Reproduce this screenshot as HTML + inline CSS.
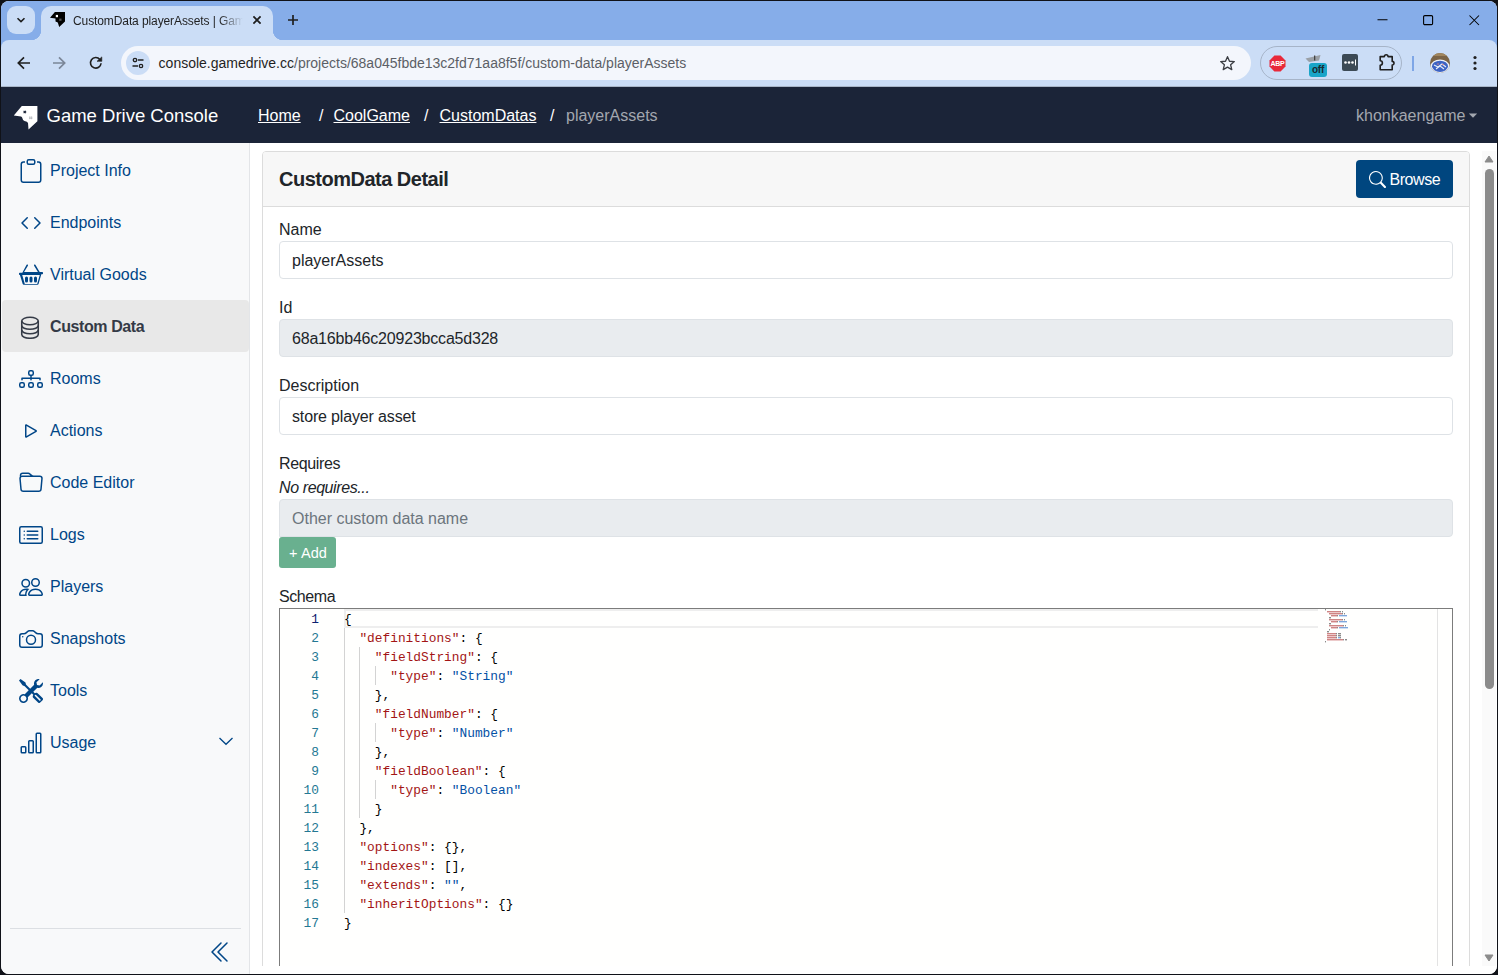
<!DOCTYPE html>
<html><head><meta charset="utf-8">
<style>
*{box-sizing:border-box;margin:0;padding:0}
html,body{width:1498px;height:975px;overflow:hidden;background:#101218;font-family:"Liberation Sans",sans-serif}
.abs{position:absolute}
#win{position:absolute;left:1px;top:1px;width:1496px;height:973px;border-radius:8px;overflow:hidden;background:#fff}
#tabstrip{position:absolute;left:0;top:0;width:1496px;height:50px;background:#86ade9}
#toolbar{position:absolute;left:0;top:39px;width:1496px;height:47px;border-radius:8px 8px 0 0;background:#cbddf6;border-bottom:1px solid #a9b6c8}
#navbar{position:absolute;left:0;top:86px;width:1496px;height:56px;background:#1b2438}
#sidebar{position:absolute;left:0;top:142px;width:249px;height:831px;background:#f8f9fa;border-right:1px solid #e3e5e8}
#main{position:absolute;left:249px;top:142px;width:1247px;height:831px;background:#fff}
.nav-item{position:absolute;left:0;width:248px;height:52px;color:#004687;font-size:16px}
.nav-item .t{position:absolute;left:49px;top:18px;line-height:18px}
.nav-item svg{position:absolute;left:17.5px;top:15px}
.nav-item.active{background:#e8e8e8;color:#343a46;font-weight:700;left:1px;width:247px;border-radius:4px;letter-spacing:-0.4px}
.nav-item.active svg{left:16px}
.nav-item.active .t{left:48px}

.lbl{position:absolute;margin-top:0.7px;left:29px;font-size:16px;line-height:16px;color:#212529;white-space:nowrap}
.inp{position:absolute;left:29px;width:1174px;height:38px;border:1px solid #dee2e6;border-radius:4px;background:#fff}
.inp.dis{background:#e9ecef}
.it{position:absolute;left:12px;top:11.3px;font-size:16px;line-height:16px;color:#212529;white-space:nowrap}
.ln{position:relative;height:19px;width:39px;text-align:right;font-family:"Liberation Mono",monospace;font-size:12.83px;line-height:19px;color:#237893}
.ln.cur{color:#0b216f}
.code{font-family:"Liberation Mono",monospace;font-size:12.83px;line-height:19px;white-space:pre;color:#000}
.cl{height:19px}
.k{color:#a31515}.v{color:#0451a5}.p{color:#000}
.g{position:absolute;width:1px;background:#d3d3d3}
</style></head>
<body>
<div id="win">
  <div id="tabstrip">
    <div class="abs" style="left:6px;top:5px;width:28px;height:28px;border-radius:9px;background:#cbddf6"></div>
    <svg class="abs" style="left:14px;top:13px" width="12" height="12" viewBox="0 0 12 12"><path d="M2.5 4.2 L6 7.6 L9.5 4.2" fill="none" stroke="#1f1f1f" stroke-width="1.6"/></svg>
    <div class="abs" style="left:40px;top:5px;width:232px;height:40px;background:#cbddf6;border-radius:10px 10px 0 0"></div>
    <div class="abs" style="left:30px;top:29px;width:10px;height:10px;background:radial-gradient(circle at 0 0,transparent 10px,#cbddf6 10.5px)"></div>
    <div class="abs" style="left:272px;top:29px;width:10px;height:10px;background:radial-gradient(circle at 100% 0,transparent 10px,#cbddf6 10.5px)"></div>
    <svg class="abs" style="left:48px;top:10px" width="17" height="17" viewBox="0 0 17 17"><path d="M5.9 1 L16 1 L16 10.5 L10.2 16 L8.8 11.4 L6.5 10.5 L6.5 7.4 L1 6.8 Z" fill="#000"/><rect x="6.8" y="3.9" width="2.2" height="2.3" fill="#fff"/><rect x="10.2" y="7.6" width="2.3" height="2.2" fill="#555"/></svg>
    <div class="abs" style="left:72px;top:13px;font-size:12px;line-height:15px;letter-spacing:-0.1px;color:#1f1f1f;white-space:nowrap;width:175px;overflow:hidden;-webkit-mask-image:linear-gradient(90deg,#000 146px,transparent 170px)">CustomData playerAssets | Game Drive</div>
    <svg class="abs" style="left:250px;top:13px" width="12" height="12" viewBox="0 0 12 12"><path d="M2.4 2.4 L9.6 9.6 M9.6 2.4 L2.4 9.6" stroke="#1f1f1f" stroke-width="1.8"/></svg>
    <svg class="abs" style="left:285px;top:12px" width="14" height="14" viewBox="0 0 14 14"><path d="M7 2 V12 M2 7 H12" stroke="#1f1f1f" stroke-width="1.7"/></svg>
    <svg class="abs" style="left:1375px;top:11px" width="14" height="14" viewBox="0 0 14 14"><path d="M1.5 7.8 H11.5" stroke="#000" stroke-width="1.1"/></svg>
    <svg class="abs" style="left:1421px;top:12px" width="14" height="14" viewBox="0 0 14 14"><rect x="1.6" y="2.6" width="9" height="9" rx="1.2" fill="none" stroke="#000" stroke-width="1.1"/></svg>
    <svg class="abs" style="left:1466px;top:12px" width="14" height="14" viewBox="0 0 14 14"><path d="M2.5 2.5 L12 12 M12 2.5 L2.5 12" stroke="#000" stroke-width="1.05"/></svg>
  </div>
  <div id="toolbar">
    <svg class="abs" style="left:13px;top:13px" width="20" height="20" viewBox="0 0 20 20"><path d="M16 10 H4.5 M10 4.3 L4.3 10 L10 15.7" fill="none" stroke="#1f1f1f" stroke-width="1.7"/></svg>
    <svg class="abs" style="left:48px;top:13px" width="20" height="20" viewBox="0 0 20 20"><path d="M4 10 H15.5 M10 4.3 L15.7 10 L10 15.7" fill="none" stroke="#7b8698" stroke-width="1.7"/></svg>
    <svg class="abs" style="left:85px;top:13px" width="20" height="20" viewBox="0 0 20 20"><path d="M15.08 10.26 A5.3 5.3 0 1 1 13.86 6.39" fill="none" stroke="#1f1f1f" stroke-width="1.6"/><path d="M11 8.35 H15.8 V3.9 Z" fill="#1f1f1f" stroke="#1f1f1f" stroke-width="0.6" stroke-linejoin="round"/></svg>
    <div class="abs" style="left:120px;top:6px;width:1130px;height:34px;border-radius:17px;background:#f3f6fc"></div>
    <div class="abs" style="left:125px;top:11px;width:24px;height:24px;border-radius:12px;background:#cbddf6"></div>
    <svg class="abs" style="left:129px;top:15px" width="16" height="16" viewBox="0 0 16 16"><circle cx="5" cy="5" r="1.7" fill="none" stroke="#1f1f1f" stroke-width="1.3"/><path d="M8 5 H13.5 M2.5 11 H8" stroke="#1f1f1f" stroke-width="1.3"/><circle cx="11" cy="11" r="1.7" fill="none" stroke="#1f1f1f" stroke-width="1.3"/></svg>
    <div class="abs" style="left:157.6px;top:15px;font-size:14px;line-height:17px;white-space:nowrap;color:#1f1f1f">console.gamedrive.cc<span style="color:#5b5f66">/projects/68a045fbde13c2fd71aa8f5f/custom-data/playerAssets</span></div>
    <svg class="abs" style="left:1216.5px;top:13.5px" width="19" height="19" viewBox="0 0 20 20"><path d="M10 2.8 L12.1 7.6 L17.2 8 L13.3 11.4 L14.5 16.5 L10 13.8 L5.5 16.5 L6.7 11.4 L2.8 8 L7.9 7.6 Z" fill="none" stroke="#3c3f44" stroke-width="1.4" stroke-linejoin="round"/></svg>
    <div class="abs" style="left:1259px;top:6px;width:142px;height:34px;border-radius:17px;border:1px solid #a6b4c8"></div>
    <svg class="abs" style="left:1268px;top:14.5px" width="17" height="17" viewBox="0 0 17 17"><path d="M5.4 0.5 H11.6 L16.5 5.4 V11.6 L11.6 16.5 H5.4 L0.5 11.6 V5.4 Z" fill="#e8293a"/><text x="8.5" y="11.2" font-family="Liberation Sans" font-weight="700" font-size="7" fill="#fff" text-anchor="middle" letter-spacing="-0.2">ABP</text></svg>
    <svg class="abs" style="left:1304px;top:14px" width="18" height="9" viewBox="0 0 18 9"><path d="M0.5 4.5 L15.5 1 L14 6.5 L4 8 Z" fill="#9aa0a6"/><rect x="9" y="1.5" width="1.3" height="5" fill="#444"/></svg>
    <div class="abs" style="left:1308px;top:23px;width:18px;height:13.5px;border-radius:3px;background:#19a5c8;color:#1a2a30;font-size:10px;font-weight:700;line-height:14px;text-align:center;letter-spacing:-0.3px">off</div>
    <div class="abs" style="left:1341px;top:14px;width:16px;height:17px;border-radius:2px;background:#3c4a55"></div>
    <svg class="abs" style="left:1341px;top:14px" width="16" height="17" viewBox="0 0 16 17"><circle cx="3.5" cy="8.5" r="1.3" fill="#fff"/><circle cx="7" cy="8.5" r="1.3" fill="#fff"/><circle cx="10.5" cy="8.5" r="1.3" fill="#fff"/><rect x="13" y="5.5" width="1" height="6" fill="#fff"/></svg>
    <svg class="abs" style="left:1375px;top:12px" width="22" height="22" viewBox="0 0 22 22"><path d="M4.2 4.6 H8.4 A1.8 1.8 0 0 1 12 4.6 H16.2 V9.4 A1.8 1.8 0 0 1 16.2 13 V17.8 H4.2 V13.2 A2.2 2.2 0 0 0 4.2 8.8 Z" fill="none" stroke="#1f1f1f" stroke-width="1.6" stroke-linejoin="round"/></svg>
    <div class="abs" style="left:1411px;top:16px;width:2px;height:15px;background:#7ea6e6"></div>
    <svg class="abs" style="left:1428px;top:12px" width="22" height="22" viewBox="0 0 22 22"><defs><clipPath id="av"><circle cx="11" cy="11" r="10"/></clipPath></defs><g clip-path="url(#av)"><rect x="0" y="0" width="22" height="22" fill="#7b6447"/><rect x="0" y="0" width="22" height="4" fill="#a0855e"/><ellipse cx="11" cy="14.5" rx="9.5" ry="7" fill="#eef2f8"/><ellipse cx="11" cy="14.3" rx="8" ry="5.6" fill="#3d63c4"/><path d="M5 13 L9 15 L13 12 L17 15 M7 17 L11 14 L15 17" stroke="#e8eef8" stroke-width="1.1" fill="none"/><circle cx="9" cy="12" r="0.8" fill="#d98080"/><circle cx="14" cy="12.5" r="0.8" fill="#d98080"/></g></svg>
    <svg class="abs" style="left:1467px;top:13px" width="14" height="20" viewBox="0 0 14 20"><circle cx="7" cy="4.5" r="1.6" fill="#1f1f1f"/><circle cx="7" cy="10" r="1.6" fill="#1f1f1f"/><circle cx="7" cy="15.5" r="1.6" fill="#1f1f1f"/></svg>
  </div>
  <div id="navbar">
    <svg class="abs" style="left:11px;top:17px" width="28" height="28" viewBox="0 0 28 28"><path d="M9.8 2.1 L25.4 2 L25.4 17.3 L16.5 25.6 L16 19 Q15.5 17.2 12.5 16.9 Q10.6 16.2 10.5 14.5 Q10.2 12.6 9.1 12.4 L1.8 11.5 Z" fill="#fff"/><path d="M11.6 6.8 L14 9.2 M14 6.8 L11.6 9.2" stroke="#1b2438" stroke-width="1.2"/><path d="M17.8 12.3 V15.3 M19.6 12.3 V15.3 M17 13.3 H20.4 M17 14.5 H20.4" stroke="#a0a4ac" stroke-width="0.5"/></svg>
    <div class="abs" style="left:45.5px;top:19.5px;font-size:18.5px;line-height:18.5px;color:#fff;white-space:nowrap">Game Drive Console</div>
    <div class="abs" style="left:257px;top:21.2px;font-size:16px;line-height:16px;color:#fff;white-space:nowrap;text-decoration:underline;text-underline-offset:0.6px">Home</div>
    <div class="abs" style="left:318px;top:21.2px;font-size:16px;line-height:16px;color:#fff">/</div>
    <div class="abs" style="left:332.5px;top:21.2px;font-size:16px;line-height:16px;color:#fff;white-space:nowrap;text-decoration:underline;text-underline-offset:0.6px">CoolGame</div>
    <div class="abs" style="left:423px;top:21.2px;font-size:16px;line-height:16px;color:#fff">/</div>
    <div class="abs" style="left:438.5px;top:21.2px;font-size:16px;line-height:16px;color:#fff;white-space:nowrap;text-decoration:underline;text-underline-offset:0.6px">CustomDatas</div>
    <div class="abs" style="left:549px;top:21.2px;font-size:16px;line-height:16px;color:#fff">/</div>
    <div class="abs" style="left:565px;top:21.2px;font-size:16px;line-height:16px;color:#a3a7af;white-space:nowrap">playerAssets</div>
    <div class="abs" style="left:1355px;top:21px;font-size:16px;line-height:16px;color:#a3a7af;white-space:nowrap">khonkaengame</div>
    <svg class="abs" style="left:1467px;top:26px" width="10" height="6" viewBox="0 0 10 6"><path d="M0.8 0.5 H9.2 L5 4.8 Z" fill="#a3a7af"/></svg>
  </div>
  <div id="sidebar">
    <div class="nav-item" style="top:1px"><svg width="24" height="24" viewBox="0 0 16 16" fill="#004687"><path d="M4 1.5H3a2 2 0 0 0-2 2V14a2 2 0 0 0 2 2h10a2 2 0 0 0 2-2V3.5a2 2 0 0 0-2-2h-1v1h1a1 1 0 0 1 1 1V14a1 1 0 0 1-1 1H3a1 1 0 0 1-1-1V3.5a1 1 0 0 1 1-1h1z"/><path d="M9.5 1a.5.5 0 0 1 .5.5v1a.5.5 0 0 1-.5.5h-3a.5.5 0 0 1-.5-.5v-1a.5.5 0 0 1 .5-.5zm-3-1A1.5 1.5 0 0 0 5 1.5v1A1.5 1.5 0 0 0 6.5 4h3A1.5 1.5 0 0 0 11 2.5v-1A1.5 1.5 0 0 0 9.5 0z"/></svg><div class="t">Project Info</div></div>
    <div class="nav-item" style="top:53px"><svg width="24" height="24" viewBox="0 0 16 16" fill="#004687"><path d="M5.854 4.854a.5.5 0 1 0-.708-.708l-3.5 3.5a.5.5 0 0 0 0 .708l3.5 3.5a.5.5 0 0 0 .708-.708L2.707 8zm4.292 0a.5.5 0 0 1 .708-.708l3.5 3.5a.5.5 0 0 1 0 .708l-3.5 3.5a.5.5 0 0 1-.708-.708L13.293 8z"/></svg><div class="t">Endpoints</div></div>
    <div class="nav-item" style="top:105px"><svg width="24" height="24" viewBox="0 0 16 16" fill="#004687"><path d="M4 10a1 1 0 0 1 2 0v2a1 1 0 0 1-2 0zm3 0a1 1 0 0 1 2 0v2a1 1 0 0 1-2 0zm4-1a1 1 0 0 0-1 1v2a1 1 0 0 0 2 0v-2a1 1 0 0 0-1-1"/><path d="M5.757 1.071a.5.5 0 0 1 .172.686L3.383 6h9.234L10.07 1.757a.5.5 0 1 1 .858-.514L13.783 6H15.5a.5.5 0 0 1 .5.5v.5a.5.5 0 0 1-.5.5h-.623l-1.844 6.456a.75.75 0 0 1-.722.544H3.189a.75.75 0 0 1-.722-.544L.623 8H.5a.5.5 0 0 1-.5-.5v-.5a.5.5 0 0 1 .5-.5h1.717L5.07 1.243a.5.5 0 0 1 .686-.172zM2.163 8l1.714 6h8.246l1.714-6z"/></svg><div class="t">Virtual Goods</div></div>
    <div class="nav-item active" style="top:157px"><svg width="24" height="24" viewBox="0 0 16 16" fill="#2b2b2b"><g fill="none" stroke="#343a46" stroke-width="1.05"><ellipse cx="8" cy="4" rx="5.5" ry="2.5"/><path d="M2.5 4v9c0 1.4 2.5 2.5 5.5 2.5s5.5-1.1 5.5-2.5V4"/><path d="M2.5 7c0 1.4 2.5 2.5 5.5 2.5S13.5 8.4 13.5 7M2.5 10c0 1.4 2.5 2.5 5.5 2.5s5.5-1.1 5.5-2.5"/></g></svg><div class="t">Custom Data</div></div>
    <div class="nav-item" style="top:209px"><svg width="24" height="24" viewBox="0 0 16 16" fill="#004687"><path fill-rule="evenodd" d="M6 3.5A1.5 1.5 0 0 1 7.5 2h1A1.5 1.5 0 0 1 10 3.5v1A1.5 1.5 0 0 1 8.5 6v1H14a.5.5 0 0 1 .5.5v1a.5.5 0 0 1-1 0V8h-5v.5a.5.5 0 0 1-1 0V8h-5v.5a.5.5 0 0 1-1 0v-1A.5.5 0 0 1 2 7h5.5V6A1.5 1.5 0 0 1 6 4.5zM8.5 5a.5.5 0 0 0 .5-.5v-1a.5.5 0 0 0-.5-.5h-1a.5.5 0 0 0-.5.5v1a.5.5 0 0 0 .5.5zM0 11.5A1.5 1.5 0 0 1 1.5 10h1A1.5 1.5 0 0 1 4 11.5v1A1.5 1.5 0 0 1 2.5 14h-1A1.5 1.5 0 0 1 0 12.5zm1.5-.5a.5.5 0 0 0-.5.5v1a.5.5 0 0 0 .5.5h1a.5.5 0 0 0 .5-.5v-1a.5.5 0 0 0-.5-.5zm4.5.5A1.5 1.5 0 0 1 7.5 10h1a1.5 1.5 0 0 1 1.5 1.5v1A1.5 1.5 0 0 1 8.5 14h-1A1.5 1.5 0 0 1 6 12.5zm1.5-.5a.5.5 0 0 0-.5.5v1a.5.5 0 0 0 .5.5h1a.5.5 0 0 0 .5-.5v-1a.5.5 0 0 0-.5-.5zm4.5.5a1.5 1.5 0 0 1 1.5-1.5h1a1.5 1.5 0 0 1 1.5 1.5v1a1.5 1.5 0 0 1-1.5 1.5h-1a1.5 1.5 0 0 1-1.5-1.5zm1.5-.5a.5.5 0 0 0-.5.5v1a.5.5 0 0 0 .5.5h1a.5.5 0 0 0 .5-.5v-1a.5.5 0 0 0-.5-.5z"/></svg><div class="t">Rooms</div></div>
    <div class="nav-item" style="top:261px"><svg width="24" height="24" viewBox="0 0 16 16" fill="#004687"><path d="M10.804 8 5 4.633v6.734zm.792-.696a.802.802 0 0 1 0 1.392l-6.363 3.692C4.713 12.69 4 12.345 4 11.692V4.308c0-.653.713-.998 1.233-.696z"/></svg><div class="t">Actions</div></div>
    <div class="nav-item" style="top:313px"><svg width="24" height="24" viewBox="0 0 16 16" fill="#004687"><path d="M.54 3.87.5 3a2 2 0 0 1 2-2h3.672a2 2 0 0 1 1.414.586l.828.828A2 2 0 0 0 9.828 3h3.982a2 2 0 0 1 1.992 2.181l-.637 7A2 2 0 0 1 13.174 14H2.826a2 2 0 0 1-1.991-1.819l-.637-7a2 2 0 0 1 .342-1.31zM2.19 4a1 1 0 0 0-.996 1.09l.637 7a1 1 0 0 0 .995.91h10.348a1 1 0 0 0 .995-.91l.637-7A1 1 0 0 0 13.81 4zm4.69-1.707A1 1 0 0 0 6.172 2H2.5a1 1 0 0 0-1 .981l.006.139q.323-.119.684-.12h5.396z"/></svg><div class="t">Code Editor</div></div>
    <div class="nav-item" style="top:365px"><svg width="24" height="24" viewBox="0 0 16 16" fill="#004687"><path d="M14.5 3a.5.5 0 0 1 .5.5v9a.5.5 0 0 1-.5.5h-13a.5.5 0 0 1-.5-.5v-9a.5.5 0 0 1 .5-.5zm-13-1A1.5 1.5 0 0 0 0 3.5v9A1.5 1.5 0 0 0 1.5 14h13a1.5 1.5 0 0 0 1.5-1.5v-9A1.5 1.5 0 0 0 14.5 2z"/><path d="M5 8a.5.5 0 0 1 .5-.5h7a.5.5 0 0 1 0 1h-7A.5.5 0 0 1 5 8m0-2.5a.5.5 0 0 1 .5-.5h7a.5.5 0 0 1 0 1h-7a.5.5 0 0 1-.5-.5m0 5a.5.5 0 0 1 .5-.5h7a.5.5 0 0 1 0 1h-7a.5.5 0 0 1-.5-.5m-1-5a.5.5 0 1 1-1 0 .5.5 0 0 1 1 0M4 8a.5.5 0 1 1-1 0 .5.5 0 0 1 1 0m0 2.5a.5.5 0 1 1-1 0 .5.5 0 0 1 1 0"/></svg><div class="t">Logs</div></div>
    <div class="nav-item" style="top:417px"><svg width="24" height="24" viewBox="0 0 16 16" fill="#004687"><path d="M15 14s1 0 1-1-1-4-5-4-5 3-5 4 1 1 1 1zm-7.978-1L7 12.996c.001-.264.167-1.03.76-1.72C8.312 10.629 9.282 10 11 10c1.717 0 2.687.63 3.24 1.276.593.69.758 1.457.76 1.72l-.008.002-.014.002zM11 7a2 2 0 1 0 0-4 2 2 0 0 0 0 4m3-2a3 3 0 1 1-6 0 3 3 0 0 1 6 0M6.936 9.28a6 6 0 0 0-1.23-.247A7 7 0 0 0 5 9c-4 0-5 3-5 4q0 1 1 1h4.216A2.24 2.24 0 0 1 5 13c0-1.01.377-2.042 1.09-2.904.243-.294.526-.569.846-.816M4.92 10A5.5 5.5 0 0 0 4 13H1c0-.26.164-1.03.76-1.724.545-.636 1.492-1.256 3.16-1.275ZM1.5 5.5a3 3 0 1 1 6 0 3 3 0 0 1-6 0m3-2a2 2 0 1 0 0 4 2 2 0 0 0 0-4"/></svg><div class="t">Players</div></div>
    <div class="nav-item" style="top:469px"><svg width="24" height="24" viewBox="0 0 16 16" fill="#004687"><path d="M15 12a1 1 0 0 1-1 1H2a1 1 0 0 1-1-1V6a1 1 0 0 1 1-1h1.172a3 3 0 0 0 2.12-.879l.83-.828A1 1 0 0 1 6.827 3h2.344a1 1 0 0 1 .707.293l.828.828A3 3 0 0 0 12.828 5H14a1 1 0 0 1 1 1zM2 4a2 2 0 0 0-2 2v6a2 2 0 0 0 2 2h12a2 2 0 0 0 2-2V6a2 2 0 0 0-2-2h-1.172a2 2 0 0 1-1.414-.586l-.828-.828A2 2 0 0 0 9.172 2H6.828a2 2 0 0 0-1.414.586l-.828.828A2 2 0 0 1 3.172 4z"/><path d="M8 11a2.5 2.5 0 1 1 0-5 2.5 2.5 0 0 1 0 5m0 1a3.5 3.5 0 1 0 0-7 3.5 3.5 0 0 0 0 7M3 6.5a.5.5 0 1 1-1 0 .5.5 0 0 1 1 0"/></svg><div class="t">Snapshots</div></div>
    <div class="nav-item" style="top:521px"><svg width="24" height="24" viewBox="0 0 16 16" fill="#004687"><path d="M1 0 0 1l2.2 3.081a1 1 0 0 0 .815.419h.07a1 1 0 0 1 .708.293l2.675 2.675-2.617 2.654A3.003 3.003 0 0 0 0 13a3 3 0 1 0 5.878-.851l2.654-2.617.968.968-.305.914a1 1 0 0 0 .242 1.023l3.27 3.27a.997.997 0 0 0 1.414 0l1.586-1.586a.997.997 0 0 0 0-1.414l-3.27-3.27a1 1 0 0 0-1.023-.242L10.5 9.5l-.96-.96 2.68-2.643A3.005 3.005 0 0 0 16 3q0-.405-.102-.777l-2.14 2.141L12 4l-.364-1.757L13.777.102a3 3 0 0 0-3.675 3.68L7.462 6.46 4.793 3.793a1 1 0 0 1-.293-.707v-.071a1 1 0 0 0-.419-.814zm9.646 10.646a.5.5 0 0 1 .708 0l2.914 2.915a.5.5 0 0 1-.707.707l-2.915-2.914a.5.5 0 0 1 0-.708M3 11l.471.242.529.026.287.445.445.287.026.529L5 13l-.242.471-.026.529-.445.287-.287.445-.529.026L3 15l-.471-.242L2 14.732l-.287-.445L1.268 14l-.026-.529L1 13l.242-.471.026-.529.445-.287.287-.445.529-.026z"/></svg><div class="t">Tools</div></div>
    <div class="nav-item" style="top:573px"><svg width="24" height="24" viewBox="0 0 16 16" fill="#004687"><path d="M4 11H2v3h2zm5-4H7v7h2zm5-5v12h-2V2zm-2-1a1 1 0 0 0-1 1v12a1 1 0 0 0 1 1h2a1 1 0 0 0 1-1V2a1 1 0 0 0-1-1zM6 7a1 1 0 0 1 1-1h2a1 1 0 0 1 1 1v7a1 1 0 0 1-1 1H7a1 1 0 0 1-1-1zm-5 4a1 1 0 0 1 1-1h2a1 1 0 0 1 1 1v3a1 1 0 0 1-1 1H2a1 1 0 0 1-1-1z"/></svg><div class="t">Usage</div><svg style="position:absolute;left:217px;top:19px" width="16" height="12" viewBox="0 0 16 12"><path d="M1.5 3 L8 9.3 L14.5 3" fill="none" stroke="#004687" stroke-width="1.3"/></svg></div>
    <div class="abs" style="left:9px;top:785px;width:231px;height:1px;background:#dcdfe3"></div>
    <svg class="abs" style="left:208px;top:797px" width="24" height="24" viewBox="0 0 16 16" fill="#004687"><path fill-rule="evenodd" d="M8.354 1.646a.5.5 0 0 1 0 .708L2.707 8l5.647 5.646a.5.5 0 0 1-.708.708l-6-6a.5.5 0 0 1 0-.708l6-6a.5.5 0 0 1 .708 0"/><path fill-rule="evenodd" d="M12.354 1.646a.5.5 0 0 1 0 .708L6.707 8l5.647 5.646a.5.5 0 0 1-.708.708l-6-6a.5.5 0 0 1 0-.708l6-6a.5.5 0 0 1 .708 0"/></svg>
  </div>
  <div id="main"><div class="abs" style="left:0;top:0;width:1247px;height:823px;overflow:hidden">
    <div class="abs" style="left:12px;top:8px;width:1208px;height:900px;border:1px solid #dcdcdc;border-radius:4px;background:#fff;overflow:hidden">
      <div class="abs" style="left:0;top:0;width:1206px;height:55px;background:#f7f7f7;border-bottom:1px solid #dcdcdc"></div>
    </div>
    <div class="abs" style="left:29px;top:25.5px;font-size:20px;line-height:20px;letter-spacing:-0.5px;font-weight:700;color:#212529;white-space:nowrap">CustomData Detail</div>
    <div class="abs" style="left:1106px;top:17px;width:97px;height:38px;border-radius:4px;background:#00467f"></div>
    <svg class="abs" style="left:1118.5px;top:28px" width="17" height="17" viewBox="0 0 16 16" fill="#fff"><path d="M11.742 10.344a6.5 6.5 0 1 0-1.397 1.398h-.001q.044.06.098.115l3.85 3.85a1 1 0 0 0 1.415-1.414l-3.85-3.85a1 1 0 0 0-.115-.1zM12 6.5a5.5 5.5 0 1 1-11 0 5.5 5.5 0 0 1 11 0"/></svg>
    <div class="abs" style="left:1139.5px;top:29px;font-size:16px;line-height:16px;letter-spacing:-0.45px;color:#fff;white-space:nowrap">Browse</div>

    <div class="lbl" style="top:78.5px">Name</div>
    <div class="inp" style="top:98px"><div class="it">playerAssets</div></div>
    <div class="lbl" style="top:156.5px">Id</div>
    <div class="inp dis" style="top:176px"><div class="it" style="letter-spacing:-0.2px">68a16bb46c20923bcca5d328</div></div>
    <div class="lbl" style="top:234.5px">Description</div>
    <div class="inp" style="top:254px"><div class="it" style="letter-spacing:-0.15px">store player asset</div></div>
    <div class="lbl" style="top:312.5px;letter-spacing:-0.35px">Requires</div>
    <div class="lbl" style="top:336.5px;font-style:italic;letter-spacing:-0.4px">No requires...</div>
    <div class="inp dis" style="top:356px;border-radius:4px 4px 4px 0"><div class="it" style="color:#6c757d">Other custom data name</div></div>
    <div class="abs" style="left:29px;top:394px;width:57px;height:31px;border-radius:3px;background:#69b08f"></div>
    <div class="abs" style="left:39px;top:403px;font-size:14.5px;line-height:14.5px;letter-spacing:0.1px;color:#fff;white-space:nowrap">+ Add</div>
    <div class="lbl" style="top:445.5px;letter-spacing:-0.4px">Schema</div>

    <div class="abs" style="left:29px;top:465px;width:1174px;height:420px;border:1px solid #7c7c7c;background:#fffffe;overflow:hidden">
      <div class="abs" style="left:0;top:1px;width:65px;height:400px"><div class="ln cur">1</div><div class="ln">2</div><div class="ln">3</div><div class="ln">4</div><div class="ln">5</div><div class="ln">6</div><div class="ln">7</div><div class="ln">8</div><div class="ln">9</div><div class="ln">10</div><div class="ln">11</div><div class="ln">12</div><div class="ln">13</div><div class="ln">14</div><div class="ln">15</div><div class="ln">16</div><div class="ln">17</div></div>
      <div class="abs" style="left:64px;top:0;width:974px;height:19px;border:2px solid #eeeeee;border-right:none"></div>
      <div class="abs" style="left:64px;top:0;width:973px;height:400px"><div class="g" style="left:0;top:19px;height:285px"></div><div class="g" style="left:15.4px;top:38px;height:171px"></div><div class="g" style="left:30.8px;top:57px;height:19px"></div><div class="g" style="left:30.8px;top:114px;height:19px"></div><div class="g" style="left:30.8px;top:171px;height:19px"></div></div>
      <div class="abs code" style="left:64px;top:1px;"><div class="cl"><span class="p">{</span></div><div class="cl">  <span class="k">"definitions"</span><span class="p">: </span><span class="p">{</span></div><div class="cl">    <span class="k">"fieldString"</span><span class="p">: </span><span class="p">{</span></div><div class="cl">      <span class="k">"type"</span><span class="p">: </span><span class="v">"String"</span></div><div class="cl">    <span class="p">},</span></div><div class="cl">    <span class="k">"fieldNumber"</span><span class="p">: </span><span class="p">{</span></div><div class="cl">      <span class="k">"type"</span><span class="p">: </span><span class="v">"Number"</span></div><div class="cl">    <span class="p">},</span></div><div class="cl">    <span class="k">"fieldBoolean"</span><span class="p">: </span><span class="p">{</span></div><div class="cl">      <span class="k">"type"</span><span class="p">: </span><span class="v">"Boolean"</span></div><div class="cl">    <span class="p">}</span></div><div class="cl">  <span class="p">},</span></div><div class="cl">  <span class="k">"options"</span><span class="p">: </span><span class="p">{},</span></div><div class="cl">  <span class="k">"indexes"</span><span class="p">: </span><span class="p">[],</span></div><div class="cl">  <span class="k">"extends"</span><span class="p">: </span><span class="v">""</span><span class="p">,</span></div><div class="cl">  <span class="k">"inheritOptions"</span><span class="p">: </span><span class="p">{}</span></div><div class="cl"><span class="p">}</span></div></div>
      <div class="abs" style="left:1045px;top:0;width:120px;height:40px"><div class="abs" style="left:0px;top:0px;width:1px;height:2px;background:linear-gradient(#8a8a8a 50%,#d0d0d0 50%)"></div><div class="abs" style="left:2px;top:2px;width:13px;height:2px;background:linear-gradient(#cf8585 50%,#eccaca 50%)"></div><div class="abs" style="left:15px;top:2px;width:1px;height:2px;background:linear-gradient(#8a8a8a 50%,#d0d0d0 50%)"></div><div class="abs" style="left:17px;top:2px;width:1px;height:2px;background:linear-gradient(#8a8a8a 50%,#d0d0d0 50%)"></div><div class="abs" style="left:4px;top:4px;width:13px;height:2px;background:linear-gradient(#cf8585 50%,#eccaca 50%)"></div><div class="abs" style="left:17px;top:4px;width:1px;height:2px;background:linear-gradient(#8a8a8a 50%,#d0d0d0 50%)"></div><div class="abs" style="left:19px;top:4px;width:1px;height:2px;background:linear-gradient(#8a8a8a 50%,#d0d0d0 50%)"></div><div class="abs" style="left:6px;top:6px;width:6px;height:2px;background:linear-gradient(#cf8585 50%,#eccaca 50%)"></div><div class="abs" style="left:12px;top:6px;width:1px;height:2px;background:linear-gradient(#8a8a8a 50%,#d0d0d0 50%)"></div><div class="abs" style="left:14px;top:6px;width:8px;height:2px;background:linear-gradient(#7ea6dd 50%,#cfdff3 50%)"></div><div class="abs" style="left:4px;top:8px;width:2px;height:2px;background:linear-gradient(#8a8a8a 50%,#d0d0d0 50%)"></div><div class="abs" style="left:4px;top:10px;width:13px;height:2px;background:linear-gradient(#cf8585 50%,#eccaca 50%)"></div><div class="abs" style="left:17px;top:10px;width:1px;height:2px;background:linear-gradient(#8a8a8a 50%,#d0d0d0 50%)"></div><div class="abs" style="left:19px;top:10px;width:1px;height:2px;background:linear-gradient(#8a8a8a 50%,#d0d0d0 50%)"></div><div class="abs" style="left:6px;top:12px;width:6px;height:2px;background:linear-gradient(#cf8585 50%,#eccaca 50%)"></div><div class="abs" style="left:12px;top:12px;width:1px;height:2px;background:linear-gradient(#8a8a8a 50%,#d0d0d0 50%)"></div><div class="abs" style="left:14px;top:12px;width:8px;height:2px;background:linear-gradient(#7ea6dd 50%,#cfdff3 50%)"></div><div class="abs" style="left:4px;top:14px;width:2px;height:2px;background:linear-gradient(#8a8a8a 50%,#d0d0d0 50%)"></div><div class="abs" style="left:4px;top:16px;width:14px;height:2px;background:linear-gradient(#cf8585 50%,#eccaca 50%)"></div><div class="abs" style="left:18px;top:16px;width:1px;height:2px;background:linear-gradient(#8a8a8a 50%,#d0d0d0 50%)"></div><div class="abs" style="left:20px;top:16px;width:1px;height:2px;background:linear-gradient(#8a8a8a 50%,#d0d0d0 50%)"></div><div class="abs" style="left:6px;top:18px;width:6px;height:2px;background:linear-gradient(#cf8585 50%,#eccaca 50%)"></div><div class="abs" style="left:12px;top:18px;width:1px;height:2px;background:linear-gradient(#8a8a8a 50%,#d0d0d0 50%)"></div><div class="abs" style="left:14px;top:18px;width:9px;height:2px;background:linear-gradient(#7ea6dd 50%,#cfdff3 50%)"></div><div class="abs" style="left:4px;top:20px;width:1px;height:2px;background:linear-gradient(#8a8a8a 50%,#d0d0d0 50%)"></div><div class="abs" style="left:2px;top:22px;width:2px;height:2px;background:linear-gradient(#8a8a8a 50%,#d0d0d0 50%)"></div><div class="abs" style="left:2px;top:24px;width:9px;height:2px;background:linear-gradient(#cf8585 50%,#eccaca 50%)"></div><div class="abs" style="left:11px;top:24px;width:1px;height:2px;background:linear-gradient(#8a8a8a 50%,#d0d0d0 50%)"></div><div class="abs" style="left:13px;top:24px;width:3px;height:2px;background:linear-gradient(#8a8a8a 50%,#d0d0d0 50%)"></div><div class="abs" style="left:2px;top:26px;width:9px;height:2px;background:linear-gradient(#cf8585 50%,#eccaca 50%)"></div><div class="abs" style="left:11px;top:26px;width:1px;height:2px;background:linear-gradient(#8a8a8a 50%,#d0d0d0 50%)"></div><div class="abs" style="left:13px;top:26px;width:3px;height:2px;background:linear-gradient(#8a8a8a 50%,#d0d0d0 50%)"></div><div class="abs" style="left:2px;top:28px;width:9px;height:2px;background:linear-gradient(#cf8585 50%,#eccaca 50%)"></div><div class="abs" style="left:11px;top:28px;width:1px;height:2px;background:linear-gradient(#8a8a8a 50%,#d0d0d0 50%)"></div><div class="abs" style="left:13px;top:28px;width:2px;height:2px;background:linear-gradient(#7ea6dd 50%,#cfdff3 50%)"></div><div class="abs" style="left:15px;top:28px;width:1px;height:2px;background:linear-gradient(#8a8a8a 50%,#d0d0d0 50%)"></div><div class="abs" style="left:2px;top:30px;width:16px;height:2px;background:linear-gradient(#cf8585 50%,#eccaca 50%)"></div><div class="abs" style="left:18px;top:30px;width:1px;height:2px;background:linear-gradient(#8a8a8a 50%,#d0d0d0 50%)"></div><div class="abs" style="left:20px;top:30px;width:2px;height:2px;background:linear-gradient(#8a8a8a 50%,#d0d0d0 50%)"></div><div class="abs" style="left:0px;top:32px;width:1px;height:2px;background:linear-gradient(#8a8a8a 50%,#d0d0d0 50%)"></div></div>
      <div class="abs" style="left:1157px;top:0;width:1px;height:420px;background:#e3e3e3"></div>
    </div>
    <div class="abs" style="left:1232px;top:8px;width:14px;height:815px;background:#fafafa"></div>
    <svg class="abs" style="left:1234px;top:12px" width="10" height="8" viewBox="0 0 10 8"><path d="M5 1 L9 7 H1 Z" fill="#8b8b8b" stroke="#8b8b8b" stroke-width="1" stroke-linejoin="round"/></svg>
    <div class="abs" style="left:1235px;top:26px;width:9px;height:520px;border-radius:4.5px;background:#8b8b8b"></div>
    <svg class="abs" style="left:1234px;top:811px" width="10" height="8" viewBox="0 0 10 8"><path d="M5 7 L9 1 H1 Z" fill="#8b8b8b" stroke="#8b8b8b" stroke-width="1" stroke-linejoin="round"/></svg>
  </div></div>
</div>
</body></html>
